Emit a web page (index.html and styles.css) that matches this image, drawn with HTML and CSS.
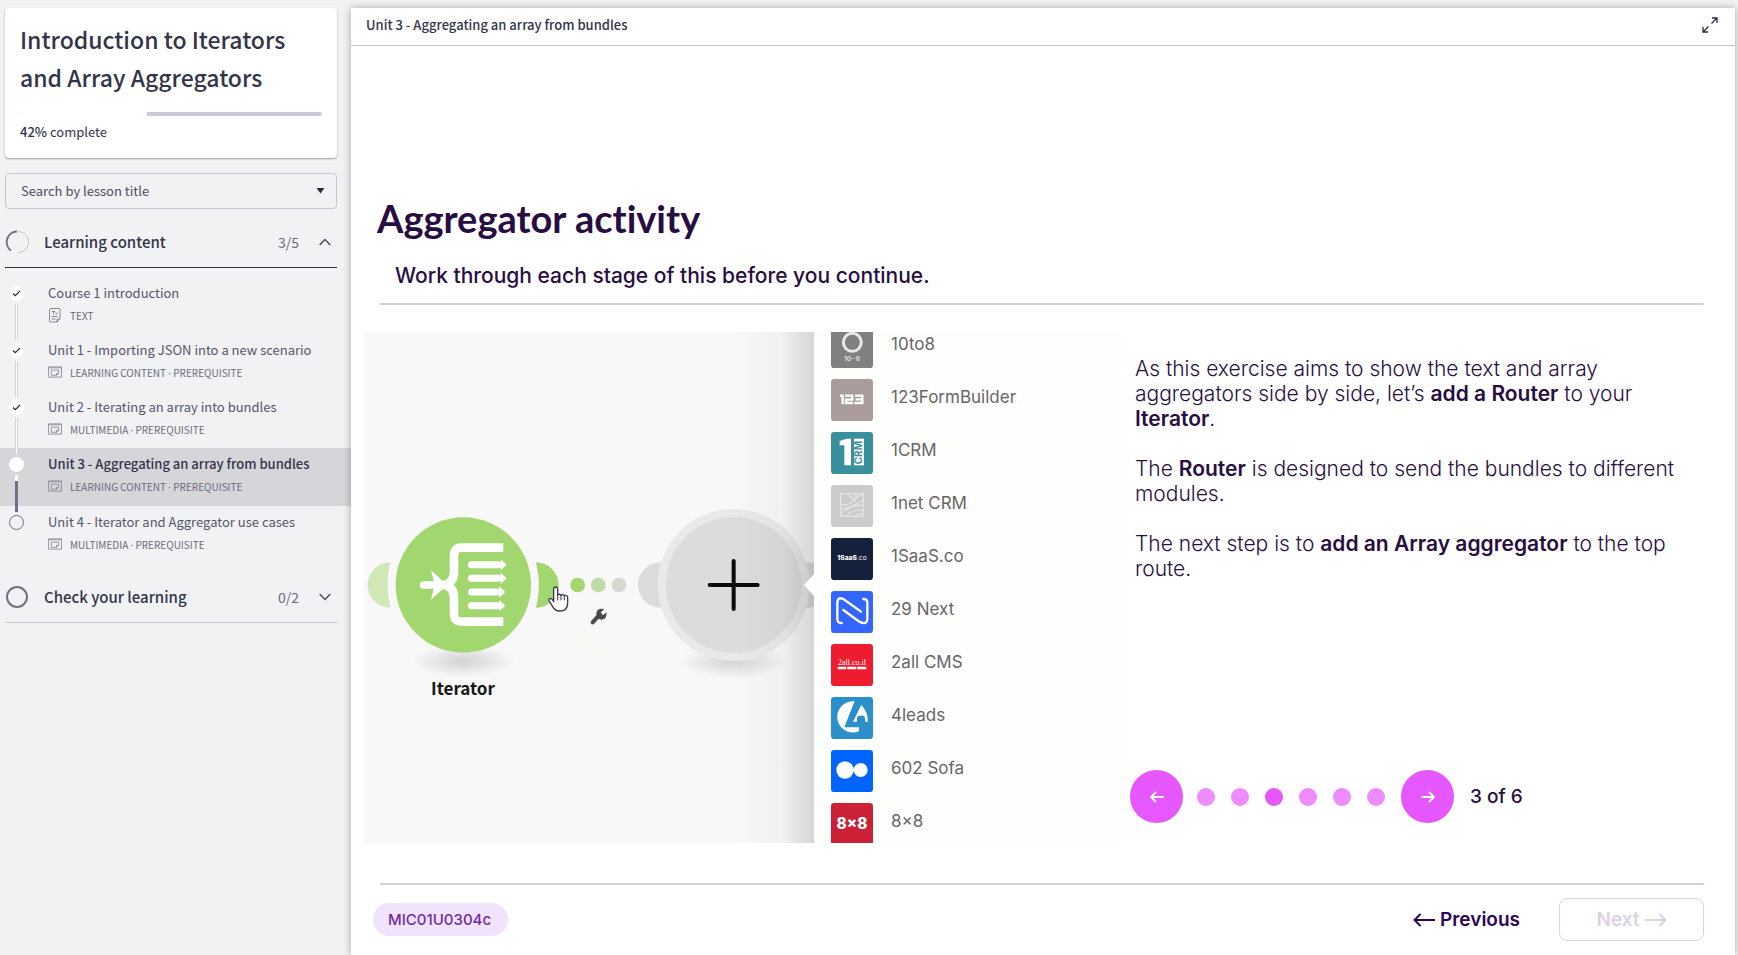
FILE: index.html
```html
<!DOCTYPE html>
<html lang="en">
<head>
<meta charset="utf-8">
<meta name="viewport" content="width=device-width, initial-scale=1">
<title>Introduction to Iterators and Array Aggregators</title>
<link rel="stylesheet" href="styles.css">
</head>
<body>
<svg class="sprite" aria-hidden="true">
  <symbol id="slide" viewBox="0 0 15 12"><path d="M.5.5h14v11H.5zM.5 1.500h14" fill="none" stroke="#8d8fa0"/><path d="M3.500 4h8v3.500L9.500 9.500h-6zM9 9.500V7.500h2.500" fill="none" stroke="#8d8fa0"/></symbol>
  <symbol id="check" viewBox="0 0 15 15"><path d="M4 7.500l2.300 2.200L11 5" fill="none" stroke="#333" stroke-width="1.300"/></symbol>
</svg>
<div class="app">
  <aside class="sidebar">
    <section class="card">
      <h1 class="course-title">Introduction to Iterators and Array Aggregators</h1>
      <div class="progress" role="progressbar" aria-label="Course progress" aria-valuenow="42" aria-valuemin="0" aria-valuemax="100"><div class="progress-done" style="width:42%"></div></div>
      <p class="percent"><b>42%</b> complete</p>
    </section>
    <div class="search">
      <select class="search-select" aria-label="Search by lesson title"><option>Search by lesson title</option></select>
      <svg class="caret" width="9" height="6" viewBox="0 0 9 6"><path d="M.5 0h8L4.500 5.500z" fill="#2b2b40"/></svg>
    </div>
    <button class="section open" type="button" aria-expanded="true">
      <svg width="24" height="24" viewBox="0 0 24 24"><circle cx="12" cy="12" r="10.500" fill="none" stroke="#fff" stroke-width="1.500"/><path d="M13 1.500A10.500 10.500 0 0 1 13 22.500" fill="none" stroke="#b9bac4"/><path d="M12 1.500A10.500 10.500 0 0 0 6 20.500" fill="none" stroke="#6f7085" stroke-width="2"/></svg>
      <span class="section-name">Learning content</span>
      <span class="count">3/5</span>
      <svg width="12" height="8" viewBox="0 0 12 8"><path d="M.7 7L6 1.500 11.300 7" fill="none" stroke="#4a4b61" stroke-width="1.400"/></svg>
    </button>
    <ol class="lessons">
      <li class="lesson">
        <div class="rail"><svg class="dot" width="15" height="15"><use href="#check"/></svg><i class="line"></i></div>
        <a class="lesson-link" href="#intro"><span class="lesson-title">Course 1 introduction</span>
          <span class="meta"><svg width="14" height="15" viewBox="0 0 14 15"><path d="M2 .5h9q1 0 1 1v9l-3 3.500H2.500q-1 0-1-1v-11q0-1 1-1M3.500 8.500h6M3.500 11h4M9 14v-3h3M4 3.500h3M5.500 3.500v3M7.500 4.500l2 2M9.500 4.500l-2 2" fill="none" stroke="#7c7d90" stroke-width=".9"/></svg><span>TEXT</span></span></a>
      </li>
      <li class="lesson">
        <div class="rail"><svg class="dot" width="15" height="15"><use href="#check"/></svg><i class="line"></i></div>
        <a class="lesson-link" href="#u1"><span class="lesson-title">Unit 1 - Importing JSON into a new scenario</span>
          <span class="meta"><svg width="14" height="12"><use href="#slide"/></svg><span>LEARNING CONTENT <span class="sep">·</span> PREREQUISITE</span></span></a>
      </li>
      <li class="lesson">
        <div class="rail"><svg class="dot" width="15" height="15"><use href="#check"/></svg><i class="line"></i></div>
        <a class="lesson-link" href="#u2"><span class="lesson-title">Unit 2 - Iterating an array into bundles</span>
          <span class="meta"><svg width="14" height="12"><use href="#slide"/></svg><span>MULTIMEDIA <span class="sep">·</span> PREREQUISITE</span></span></a>
      </li>
      <li class="lesson active">
        <div class="rail"><i class="dot"></i><i class="line"></i></div>
        <a class="lesson-link" href="#u3" aria-current="page"><span class="lesson-title">Unit 3 - Aggregating an array from bundles</span>
          <span class="meta"><svg width="14" height="12"><use href="#slide"/></svg><span>LEARNING CONTENT <span class="sep">·</span> PREREQUISITE</span></span></a>
      </li>
      <li class="lesson">
        <div class="rail"><i class="dot empty"></i></div>
        <a class="lesson-link" href="#u4"><span class="lesson-title">Unit 4 - Iterator and Aggregator use cases</span>
          <span class="meta"><svg width="14" height="12"><use href="#slide"/></svg><span>MULTIMEDIA <span class="sep">·</span> PREREQUISITE</span></span></a>
      </li>
    </ol>
    <button class="section" type="button" aria-expanded="false">
      <svg width="24" height="24" viewBox="0 0 24 24"><circle cx="12" cy="12" r="10" fill="none" stroke="#6f7085" stroke-width="2"/></svg>
      <span class="section-name">Check your learning</span>
      <span class="count">0/2</span>
      <svg width="12" height="8" viewBox="0 0 12 8"><path d="M.7 1L6 6.500 11.300 1" fill="none" stroke="#4a4b61" stroke-width="1.400"/></svg>
    </button>
  </aside>

  <main class="panel">
    <header class="topbar">
      <span>Unit 3 - Aggregating an array from bundles</span>
      <button class="expand" type="button" aria-label="Full screen"><svg width="16" height="16" viewBox="0 0 16 16"><path d="M9.500 6.500L15 1M10 1h5v5M6.500 9.500L1 15M1 10v5h5" fill="none" stroke="#2b2b40" stroke-width="1.300"/></svg></button>
    </header>
    <div class="slide">
      <h2 class="slide-title">Aggregator activity</h2>
      <p class="lead">Work through each stage of this before you continue.</p>
      <hr class="rule">
      <div class="stage">
        <div class="media">
          <svg class="canvas" width="450" height="511" viewBox="0 0 450 511">
            <defs>
              <linearGradient id="edge"><stop offset="0" stop-color="#000" stop-opacity="0"/><stop offset=".6" stop-color="#000" stop-opacity=".03"/><stop offset="1" stop-color="#000" stop-opacity=".14"/></linearGradient>
              <radialGradient id="drop"><stop offset="0" stop-color="#000" stop-opacity=".15"/><stop offset="1" stop-color="#000" stop-opacity="0"/></radialGradient>
            </defs>
            <rect width="450" height="511" fill="#f8f8f8"/>
            <g transform="translate(-4 149) scale(.3333)">
              <path d="M640 430l110 155" stroke="#f9f9f3" stroke-width="22"/>
              <ellipse cx="310" cy="540" rx="155" ry="50" fill="url(#drop)"/>
              <path d="M91 244a68 68 0 0 0 0 136Q74 312 91 244z" fill="#cfe8b5"/>
              <path d="M528 244a68 68 0 0 1 0 136Q546 312 528 244z" fill="#a2d66f"/>
              <circle cx="310" cy="312" r="203" fill="#a2d66f"/>
              <g fill="none" stroke="#fff">
                <path d="M430 200H304q-22 0-22 24v50q0 32-30 38q30 6 30 38v48q0 24 22 24H430" stroke-width="26"/>
                <path d="M190 312h45" stroke-width="22" stroke-linecap="round"/>
                <path d="M334 251h80M334 292h80M334 333h80M334 374h80" stroke-width="21" stroke-linecap="round"/>
              </g>
              <path d="M213 268l49 44-49 44 11-44zM422 234l18 17-18 17zM422 275l18 17-18 17zM418 316l18 17-18 17zM418 357l18 17-18 17z" fill="#fff"/>
              <circle cx="653" cy="312" r="22" fill="#a2d66f"/><circle cx="715" cy="312" r="22" fill="#bddba3"/><circle cx="777" cy="312" r="22" fill="#d5dacd"/>
              <path d="M698 424l22-24" stroke="#4a4a4a" stroke-width="12" stroke-linecap="round"/>
              <path d="M732 384q-20-4-23 12 0 17 16 20 16-1 15-22l-11 8-8-6z" fill="#4a4a4a"/>
              <path d="M581 362v-38q0-6 6-6t6 6v18q6-5 10 1 6-5 10 1 10-3 10 7v15q0 24-24 24-14 0-21-13l-12-20q2-7 10-3z" fill="#fff" stroke="#39394d" stroke-width="4" stroke-linejoin="round"/>
              <path d="M593 340v18M603 343v15M613 345v13" stroke="#39394d" stroke-width="3"/>
            </g>
            <text class="node-name" x="99" y="363" text-anchor="middle">Iterator</text>
            <g transform="translate(236 149) scale(.3333)">
              <ellipse cx="400" cy="542" rx="160" ry="52" fill="url(#drop)"/>
              <circle cx="182" cy="312" r="68" fill="#dbdbdb"/><circle cx="620" cy="312" r="68" fill="#dbdbdb"/>
              <circle cx="401" cy="312" r="228" fill="#e9e9e9"/>
              <circle cx="401" cy="312" r="204" fill="#dcdcdc"/>
              <path d="M401 240v144M329 312h144" stroke="#0a0a0a" stroke-width="12" stroke-linecap="round"/>
            </g>
            <rect x="370" width="80" height="511" fill="url(#edge)"/>
            <path d="M440 253l10-11v22z" fill="#fefefd"/>
          </svg>
          <ul class="apps">
            <li><svg width="42" height="42" viewBox="0 0 126 126"><rect width="126" height="126" rx="10" fill="#808080"/><circle cx="64" cy="49" r="27" fill="none" stroke="#e8e8e8" stroke-width="9"/><text x="63" y="105" text-anchor="middle" font-size="20" font-weight="700" fill="#ddd">10··8</text></svg><span>10to8</span></li>
            <li><svg width="42" height="42" viewBox="0 0 126 126"><rect width="126" height="126" rx="10" fill="#ab9c9c"/><g fill="none" stroke="#fff" stroke-width="7"><path d="M27 50h8v26M42 50h22v12H45v10h21M72 50h22v22H70M74 61h20"/></g></svg><span>123FormBuilder</span></li>
            <li><svg width="42" height="42" viewBox="0 0 126 126"><rect width="126" height="126" rx="10" fill="#38909c"/><path d="M26 27l20-7h14v80H40V40H26z" fill="#fff"/><rect x="69" y="20" width="30" height="80" fill="#fff"/><text transform="translate(94 97) rotate(-90)" font-size="30" font-weight="700" fill="#38909c">CRM</text></svg><span>1CRM</span></li>
            <li><svg width="42" height="42" viewBox="0 0 126 126"><rect width="126" height="126" rx="10" fill="#cbcbcb"/><g fill="none" stroke="#e3e3e3" stroke-width="4"><path d="M29 26h68v68H29zM30 58q20 8 40-14 14-14 26-16M30 72q30-2 65-26M30 86q26-24 66-26M46 94q14-20 50-20M70 94q10-8 26-8M50 28l22 20 4-20"/></g></svg><span>1net CRM</span></li>
            <li><svg width="42" height="42" viewBox="0 0 126 126"><rect width="126" height="126" rx="10" fill="#14213d"/><text x="63" y="66" text-anchor="middle" font-size="20" fill="#fff"><tspan font-weight="800">1SaaS</tspan>.co</text></svg><span>1SaaS.co</span></li>
            <li><svg width="42" height="42" viewBox="0 0 126 126"><rect width="126" height="126" rx="10" fill="#3366ff"/><path d="M32 96q-13 1-13-12V36q0-20 18-12l53 38M37 57l48 35q24 12 24-10V36q0-13-12-12" fill="none" stroke="#fff" stroke-width="7" stroke-linecap="round"/></svg><span>29 Next</span></li>
            <li><svg width="42" height="42" viewBox="0 0 126 126"><rect width="126" height="126" rx="10" fill="#ee1c2e"/><text class="serif" x="63" y="64" text-anchor="middle" font-size="24" fill="#fff">2all.co.il</text><path d="M20 72h26M49 72h27M79 72h27" stroke="#fff" stroke-width="8"/></svg><span>2all CMS</span></li>
            <li><svg width="42" height="42" viewBox="0 0 126 126"><rect width="126" height="126" rx="10" fill="#2b8fcb"/><path d="M71 13a47 47 0 1 0 13 90V91H40zM91 24L66 74h12V65q0-9 9-9 15-2 15 10v9h8q2-30-19-51z" fill="#fff"/><path d="M71 15L42 89h16L80 30z" fill="#2b8fcb"/></svg><span>4leads</span></li>
            <li><svg width="42" height="42" viewBox="0 0 126 126"><rect width="126" height="126" rx="10" fill="#0065ff"/><circle cx="42" cy="60" r="26" fill="#fff"/><circle cx="89" cy="60" r="21" fill="#fff"/><path d="M62 56h12v8H62z" fill="#fff"/></svg><span>602 Sofa</span></li>
            <li><svg width="42" height="42" viewBox="0 0 126 126"><rect width="126" height="126" rx="10" fill="#cb2036"/><text x="63" y="77" text-anchor="middle" font-size="46" font-weight="800" fill="#fff">8x8</text></svg><span>8×8</span></li>
          </ul>
        </div>
        <div class="notes">
          <div class="copy">
            <p>As this exercise aims to show the text and array aggregators side by side, let’s <b>add a Router</b> to your <b>Iterator</b>.</p>
            <p>The <b>Router</b> is designed to send the bundles to different modules.</p>
            <p>The next step is to <b>add an Array aggregator</b> to the top route.</p>
          </div>
          <nav class="pager" aria-label="Steps">
            <button class="round" type="button" aria-label="Previous step"><svg width="14" height="12" viewBox="0 0 14 12"><path d="M13.500 6H1.500M6 1L1.200 6 6 11" fill="none" stroke="#fff" stroke-width="2"/></svg></button>
            <span class="steps"><i></i><i></i><i class="on"></i><i></i><i></i><i></i></span>
            <button class="round" type="button" aria-label="Next step"><svg width="14" height="12" viewBox="0 0 14 12"><path d="M.5 6h12M8 1l4.800 5L8 11" fill="none" stroke="#fff" stroke-width="2"/></svg></button>
            <span class="step-text">3 of 6</span>
          </nav>
        </div>
      </div>
      <hr class="rule">
      <footer class="bottom">
        <span class="code">MIC01U0304c</span>
        <div class="actions">
          <button class="prev" type="button"><svg width="22" height="14" viewBox="0 0 22 14"><path d="M22 7H1.500M7.500 1L1.500 7l6 6" fill="none" stroke="currentColor" stroke-width="2"/></svg>Previous</button>
          <button class="next" type="button" disabled>Next<svg width="22" height="14" viewBox="0 0 22 14"><path d="M0 7h20.500M14.500 1l6 6-6 6" fill="none" stroke="currentColor" stroke-width="2"/></svg></button>
        </div>
      </footer>
    </div>
  </main>
</div>
</body>
</html>
```
FILE: styles.css
```css
* { box-sizing: border-box; }
body { margin: 0; background: #f1f2f4; color: #33344a; font-family: "Noto Sans CJK SC", "Noto Sans", sans-serif; }
h1, h2, p, ol, ul { margin: 0; padding: 0; }
ol, ul { list-style: none; }
button { font: inherit; color: inherit; background: none; border: 0; padding: 0; }
a { color: inherit; text-decoration: none; }
svg { flex: none; display: block; }
.sprite { position: absolute; width: 0; height: 0; }

.app { display: flex; min-height: 100vh; padding: 8px 3px 0 0; }

.sidebar { width: 351px; flex: none; }
.card { margin: 0 14px 0 5px; padding: 12px 15px 14px; background: #fff; border-radius: 4px; box-shadow: 0 1px 2px rgba(0, 0, 0, .35); }
.course-title { font-size: 23px; line-height: 38px; font-weight: 500; }
.progress { height: 4px; margin-top: 16px; border-radius: 2px; background: #cacbd6; overflow: hidden; }
.progress-done { height: 4px; background: #fff; }
.percent { margin-top: 4px; font-size: 13px; line-height: 24px; }
.percent b { font-weight: 500; }

.search { position: relative; margin: 15px 14px 0 5px; }
.search-select { appearance: none; display: block; width: 100%; height: 36px; padding: 0 15px 2px; border: 1px solid #c6c7d4; border-radius: 4px; background: transparent; color: #4c4d60; font: 13px "Noto Sans CJK SC", sans-serif; }
.caret { position: absolute; right: 12px; top: 15px; }

.section { display: flex; align-items: center; width: 332px; height: 52px; margin: 7px 14px 0 5px; padding-right: 6px; border-bottom: 1px solid #c6c7d4; text-align: left; }
.section.open { border-color: #33344a; }
.section-name { flex: 1; padding-left: 15px; font-size: 15px; font-weight: 500; }
.count { margin-right: 20px; font-size: 14px; color: #6a6b7e; }

.lessons { margin-top: 9px; }
.lesson { display: flex; height: 57px; padding-left: 9px; }
.lesson.active { height: 58px; background: #d5d6da; }
.lessons + .section { margin-top: 8px; }
.rail { display: flex; flex-direction: column; align-items: center; gap: 3px; width: 15px; margin-right: 24px; padding-top: 9px; }
.dot { width: 15px; height: 15px; border-radius: 50%; background: #fff; }
.dot.empty { background: none; border: 1px solid #6f7085; }
.line { flex: 1; width: 3px; margin-bottom: -6px; border: solid #d3d4da; border-width: 0 1px; background: #fff; z-index: 1; }
.active .line { border: 0; background: linear-gradient(#fff 6px, #6f7085 6px); }
.lesson-link { padding-top: 5px; }
.lesson-title { display: block; font-size: 13px; line-height: 22px; color: #55566b; }
.active .lesson-title { font-weight: 500; color: #33344a; }
.meta { display: flex; align-items: center; gap: 8px; height: 22px; font-size: 10px; color: #6a6b7e; }
.sep { font-family: "Noto Sans", sans-serif; }

.panel { display: flex; flex-direction: column; flex: 1; min-width: 0; background: #fff; box-shadow: 0 0 8px rgba(0, 0, 0, .3); }
.topbar { display: flex; align-items: center; justify-content: space-between; height: 38px; padding: 0 17px 4px 15px; border-bottom: 1px solid #c6c7d4; font-size: 13px; font-weight: 500; }

.slide { display: flex; flex-direction: column; padding: 146px 31px 12px 13px; color: #270d42; font-family: Inter, sans-serif; }
.slide-title { padding-left: 13px; font: 700 38px/52px Lato, sans-serif; font-variant-ligatures: none; }
.lead { margin-top: 17px; padding-left: 31px; font-size: 21px; line-height: 30px; font-weight: 500; }
.rule { width: auto; height: 2px; margin: 12px 0 0 16px; border: 0; background: #d6d0d4; }
.stage { display: flex; margin: 27px 0 40px; }
.stage + .rule { margin-top: 0; }
.media { display: flex; width: 757px; height: 511px; flex: none; overflow: hidden; background: #fefefd; }
.node-name { font: 700 17px "Noto Sans CJK SC", sans-serif; fill: #161616; }
.apps { margin-top: -12px; padding-left: 17px; color: #666; font-size: 17px; }
.apps li { display: flex; align-items: center; gap: 18px; height: 53px; }
.apps li > span { padding-bottom: 5px; }
.apps text { font-family: Inter, sans-serif; }
.apps .serif { font-family: "Liberation Serif", serif; }
.notes { display: flex; flex-direction: column; justify-content: space-between; flex: 1; min-width: 0; padding: 24px 0 20px 9px; }
.copy { display: grid; gap: 25px; padding-left: 5px; font-size: 21px; line-height: 25px; font-weight: 300; }
.copy b { font-weight: 600; }
.pager { display: flex; align-items: center; }
.round { display: grid; place-items: center; width: 53px; height: 53px; border-radius: 50%; background: #e757ff; }
.steps { display: flex; gap: 16px; margin: 0 16px 0 14px; }
.steps i { width: 18px; height: 18px; border-radius: 50%; background: #ee8bff; }
.steps .on { background: #e757ff; }
.step-text { margin-left: 16px; font-size: 19px; font-weight: 500; }

.bottom { display: flex; align-items: center; justify-content: space-between; margin-top: 13px; padding-left: 9px; }
.code { padding: 0 17px 0 15px; border-radius: 17px; background: #f0e3fb; color: #6f2da8; font-size: 15px; line-height: 33px; font-weight: 500; }
.actions { display: flex; align-items: center; gap: 39px; font-size: 19px; font-weight: 600; }
.prev, .next { display: flex; align-items: center; justify-content: center; gap: 5px; }
.prev { color: #2c0357; }
.next { width: 145px; height: 43px; border: 1px solid #dcd2e6; border-radius: 8px; color: #dcd2e6; }
```
